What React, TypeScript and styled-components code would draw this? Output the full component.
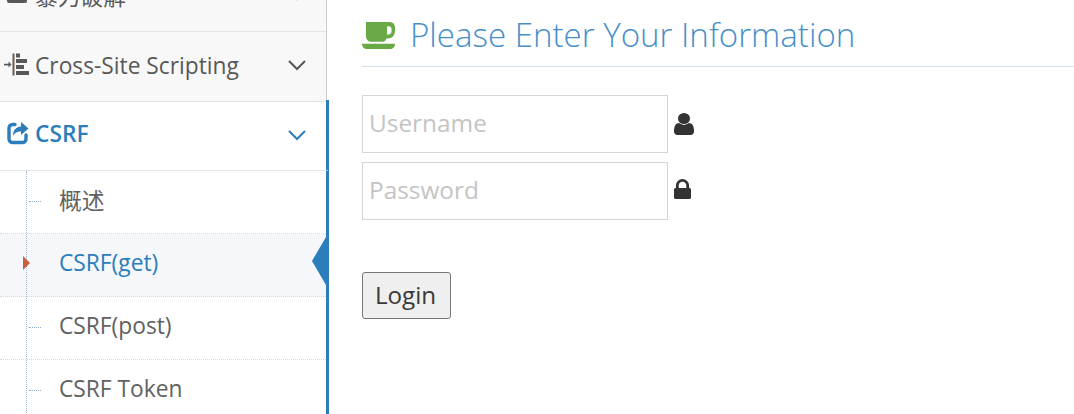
import React from "react";
import styled, { createGlobalStyle } from "styled-components";

const Global = createGlobalStyle`
  html, body { margin: 0; padding: 0; width: 1074px; height: 414px; overflow: hidden; background: #fff; }
  body { font-family: "Open Sans", "Noto Sans CJK SC", sans-serif; color: #393939; }
  * { box-sizing: border-box; }
`;

const Page = styled.div`
  display: flex;
  width: 1074px;
  height: 414px;
  overflow: hidden;
`;

const Sidebar = styled.nav`
  width: 327px;
  height: 452px;
  flex: none;
  margin-top: -38px;
  background: #f8f8f8;
  border-right: 1px solid #ccc;
  display: flex;
  flex-direction: column;
`;

const MenuRow = styled.div<{ $active?: boolean }>`
  position: relative;
  height: ${(p) => (p.$active ? "69px" : "70px")};
  flex: none;
  display: flex;
  align-items: center;
  padding: 0 20px ${(p) => (p.$active ? "6px" : "3px")} 4px;
  gap: 6px;
  font-size: 22.75px;
  background: ${(p) => (p.$active ? "#fff" : "#f8f8f8")};
  color: ${(p) => (p.$active ? "#2b7dbc" : "#585858")};
  border-bottom: 1px solid #e5e5e5;
  font-weight: ${(p) => (p.$active ? 600 : 400)};
  ${(p) =>
    p.$active &&
    `
    width: 329px;
    border-right: 3px solid #2b7dbc;
    &::after {
      content: "";
      position: absolute;
      top: -2px;
      right: -3px;
      width: 3px;
      height: 2px;
      background: #2b7dbc;
    }
  `}
`;

const MenuIcon = styled.svg`
  width: 25px;
  height: 24px;
  flex: none;
  fill: currentColor;
  overflow: visible;
`;

const MenuLabel = styled.span`
  flex: 1;
  white-space: nowrap;
`;

const Chevron = styled.svg<{ $active?: boolean }>`
  width: 18px;
  height: 11px;
  flex: none;
  margin-top: ${(p) => (p.$active ? "4px" : "1px")};
  color: ${(p) => (p.$active ? "#2b7dbc" : "#585858")};
`;

const SubMenu = styled.div`
  position: relative;
  width: 329px;
  flex: 1;
  background: #fff;
  border-right: 3px solid #2b7dbc;
  display: flex;
  flex-direction: column;
  &::before {
    content: "";
    position: absolute;
    z-index: 1;
    left: 26px;
    top: 0;
    bottom: 0;
    border-left: 1px dotted #9dbbd4;
  }
`;

const SubRow = styled.div<{ $current?: boolean; $last?: boolean }>`
  position: relative;
  height: 63px;
  flex: none;
  display: flex;
  align-items: center;
  padding-left: 59px;
  padding-bottom: 6px;
  font-size: 22.75px;
  white-space: nowrap;
  color: ${(p) => (p.$current ? "#2b7dbc" : "#616161")};
  background: ${(p) => (p.$current ? "#f5f7fa" : "#fff")};
  border-bottom: ${(p) => (p.$last ? "none" : "1px dotted #d8d8d8")};
  &::before {
    content: "";
    position: absolute;
    left: 29px;
    top: 30px;
    width: 12px;
    border-top: 1px dotted #8fb0cc;
    display: ${(p) => (p.$current ? "none" : "block")};
  }
`;

const CurrentMarker = styled.span`
  position: absolute;
  z-index: 2;
  left: 23px;
  top: 22px;
  border-left: 7px solid #c86139;
  border-top: 7px solid transparent;
  border-bottom: 7px solid transparent;
`;

const ActivePointer = styled.span`
  position: absolute;
  right: 0;
  top: 3px;
  width: 14px;
  height: 48px;
  background: #2b7dbc;
  clip-path: polygon(100% 0, 0 50%, 100% 100%);
`;

const Main = styled.main`
  flex: 1;
  min-width: 0;
  padding-left: 35px;
  display: flex;
  flex-direction: column;
`;

const Header = styled.header`
  height: 67px;
  flex: none;
  display: flex;
  align-items: center;
  gap: 15px;
  padding-top: 3px;
  border-bottom: 1px solid #d5e3ef;
  font-size: 33.1px;
  font-weight: 300;
  color: #478fca;
  white-space: nowrap;
`;

const CupIcon = styled.svg`
  width: 33px;
  height: 28px;
  flex: none;
  fill: #69aa46;
  margin-top: 2px;
`;

const Form = styled.form`
  display: flex;
  flex-direction: column;
  gap: 9px;
  padding-top: 28px;
`;

const FieldRow = styled.div`
  display: flex;
  align-items: center;
  gap: 6px;
`;

const Field = styled.input`
  width: 306px;
  height: 58px;
  border: 1px solid #d5d5d5;
  background: #fff;
  padding: 0 7px 4px 6px;
  font-family: inherit;
  font-size: 24.4px;
  outline: none;
  &::placeholder {
    color: #c4c4c4;
    opacity: 1;
  }
`;

const UserIcon = styled.svg`
  width: 20px;
  height: 22px;
  flex: none;
  fill: #333;
`;

const LockIcon = styled.svg`
  width: 17px;
  height: 20px;
  flex: none;
  fill: #333;
  margin-bottom: 4px;
`;

const Login = styled.button`
  margin-top: 43px;
  width: 89px;
  height: 47px;
  align-self: flex-start;
  background: #efefef;
  border: 1px solid #767676;
  border-radius: 3px;
  padding: 0 2px 2px 0;
  font-family: inherit;
  font-size: 24.2px;
  color: #393939;
`;

const Down = ({ active }: { active?: boolean }) => (
  <Chevron $active={active} viewBox="0 0 18 11" fill="none" stroke="currentColor" strokeWidth="2">
    <path d="M1 1l8 8 8-8" />
  </Chevron>
);

export default function App() {
  return (
    <Page>
      <Global />
      <Sidebar>
        <MenuRow>
          <MenuIcon viewBox="0 0 25 24">
            <rect x="3" y="6" width="20" height="14" rx="2" />
          </MenuIcon>
          <MenuLabel>暴力破解</MenuLabel>
          <Down />
        </MenuRow>
        <MenuRow>
          <MenuIcon viewBox="0 0 25 24">
            <rect x="0" y="10.8" width="5" height="1.6" />
            <path d="M4.500 8.600l3 3-3 3z" />
            <rect x="8.500" y="0.500" width="2" height="22" fill="#6b5a50" />
            <rect x="12" y="0.500" width="4" height="4" />
            <rect x="12" y="6" width="11" height="4" />
            <rect x="12" y="12" width="8" height="4" />
            <rect x="12" y="18" width="13" height="4" />
          </MenuIcon>
          <MenuLabel>Cross-Site Scripting</MenuLabel>
          <Down />
        </MenuRow>
        <MenuRow $active>
          <MenuIcon viewBox="0 0 25 24">
            <path
              d="M11 3.500H8.500a3.500 3.500 0 0 0-3.500 3.500v11a3.500 3.500 0 0 0 3.500 3.500h10a3.500 3.500 0 0 0 3.500-3.500v-4"
              fill="none"
              stroke="currentColor"
              strokeWidth="3.400"
              strokeLinecap="round"
            />
            <path d="M17 1l7.500 6.500L17 14v-3.500c-4 0-6 1-8 4.500 0-5.500 2.500-9 8-9.500z" />
          </MenuIcon>
          <MenuLabel>CSRF</MenuLabel>
          <Down active />
        </MenuRow>
        <SubMenu>
          <SubRow>概述</SubRow>
          <SubRow $current>
            <CurrentMarker />
            CSRF(get)
            <ActivePointer />
          </SubRow>
          <SubRow>CSRF(post)</SubRow>
          <SubRow $last>CSRF Token</SubRow>
        </SubMenu>
      </Sidebar>
      <Main>
        <Header>
          <CupIcon viewBox="0 0 33 27" preserveAspectRatio="none">
            <path
              fillRule="evenodd"
              d="M4 0h24a5 5 0 0 1 5 5v4a7 7 0 0 1-7 7h-1.500a4 4 0 0 1-4 3H9a5 5 0 0 1-5-5zM25 4v8h1.500a3 3 0 0 0 3-3V7a3 3 0 0 0-3-3z"
            />
            <path d="M0 21h33c0 3-2 5-4 5H4c-2 0-4-2-4-5z" />
          </CupIcon>
          Please Enter Your Information
        </Header>
        <Form onSubmit={(e) => e.preventDefault()}>
          <FieldRow>
            <Field placeholder="Username" />
            <UserIcon viewBox="256 128 1280 1536" preserveAspectRatio="none">
              <path d="M1536 1399q0 109-62.500 187t-150.500 78h-854q-88 0-150.500-78t-62.500-187q0-85 8.500-160.500t31.500-152 58.500-131 94-89 134.500-34.500q131 128 313 128t313-128q76 0 134.500 34.500t94 89 58.500 131 31.500 152 8.500 160.500zm-256-887q0 159-112.500 271.500t-271.500 112.500-271.500-112.500-112.500-271.500 112.500-271.500 271.500-112.500 271.500 112.500 112.500 271.500z" />
            </UserIcon>
          </FieldRow>
          <FieldRow>
            <Field placeholder="Password" type="password" />
            <LockIcon viewBox="320 128 1152 1408" preserveAspectRatio="none">
              <path d="M640 768h512v-192q0-106-75-181t-181-75-181 75-75 181v192zm832 96v576q0 40-28 68t-68 28h-960q-40 0-68-28t-28-68v-576q0-40 28-68t68-28h32v-192q0-184 132-316t316-132 316 132 132 316v192h32q40 0 68 28t28 68z" />
            </LockIcon>
          </FieldRow>
          <Login type="button">Login</Login>
        </Form>
      </Main>
    </Page>
  );
}
